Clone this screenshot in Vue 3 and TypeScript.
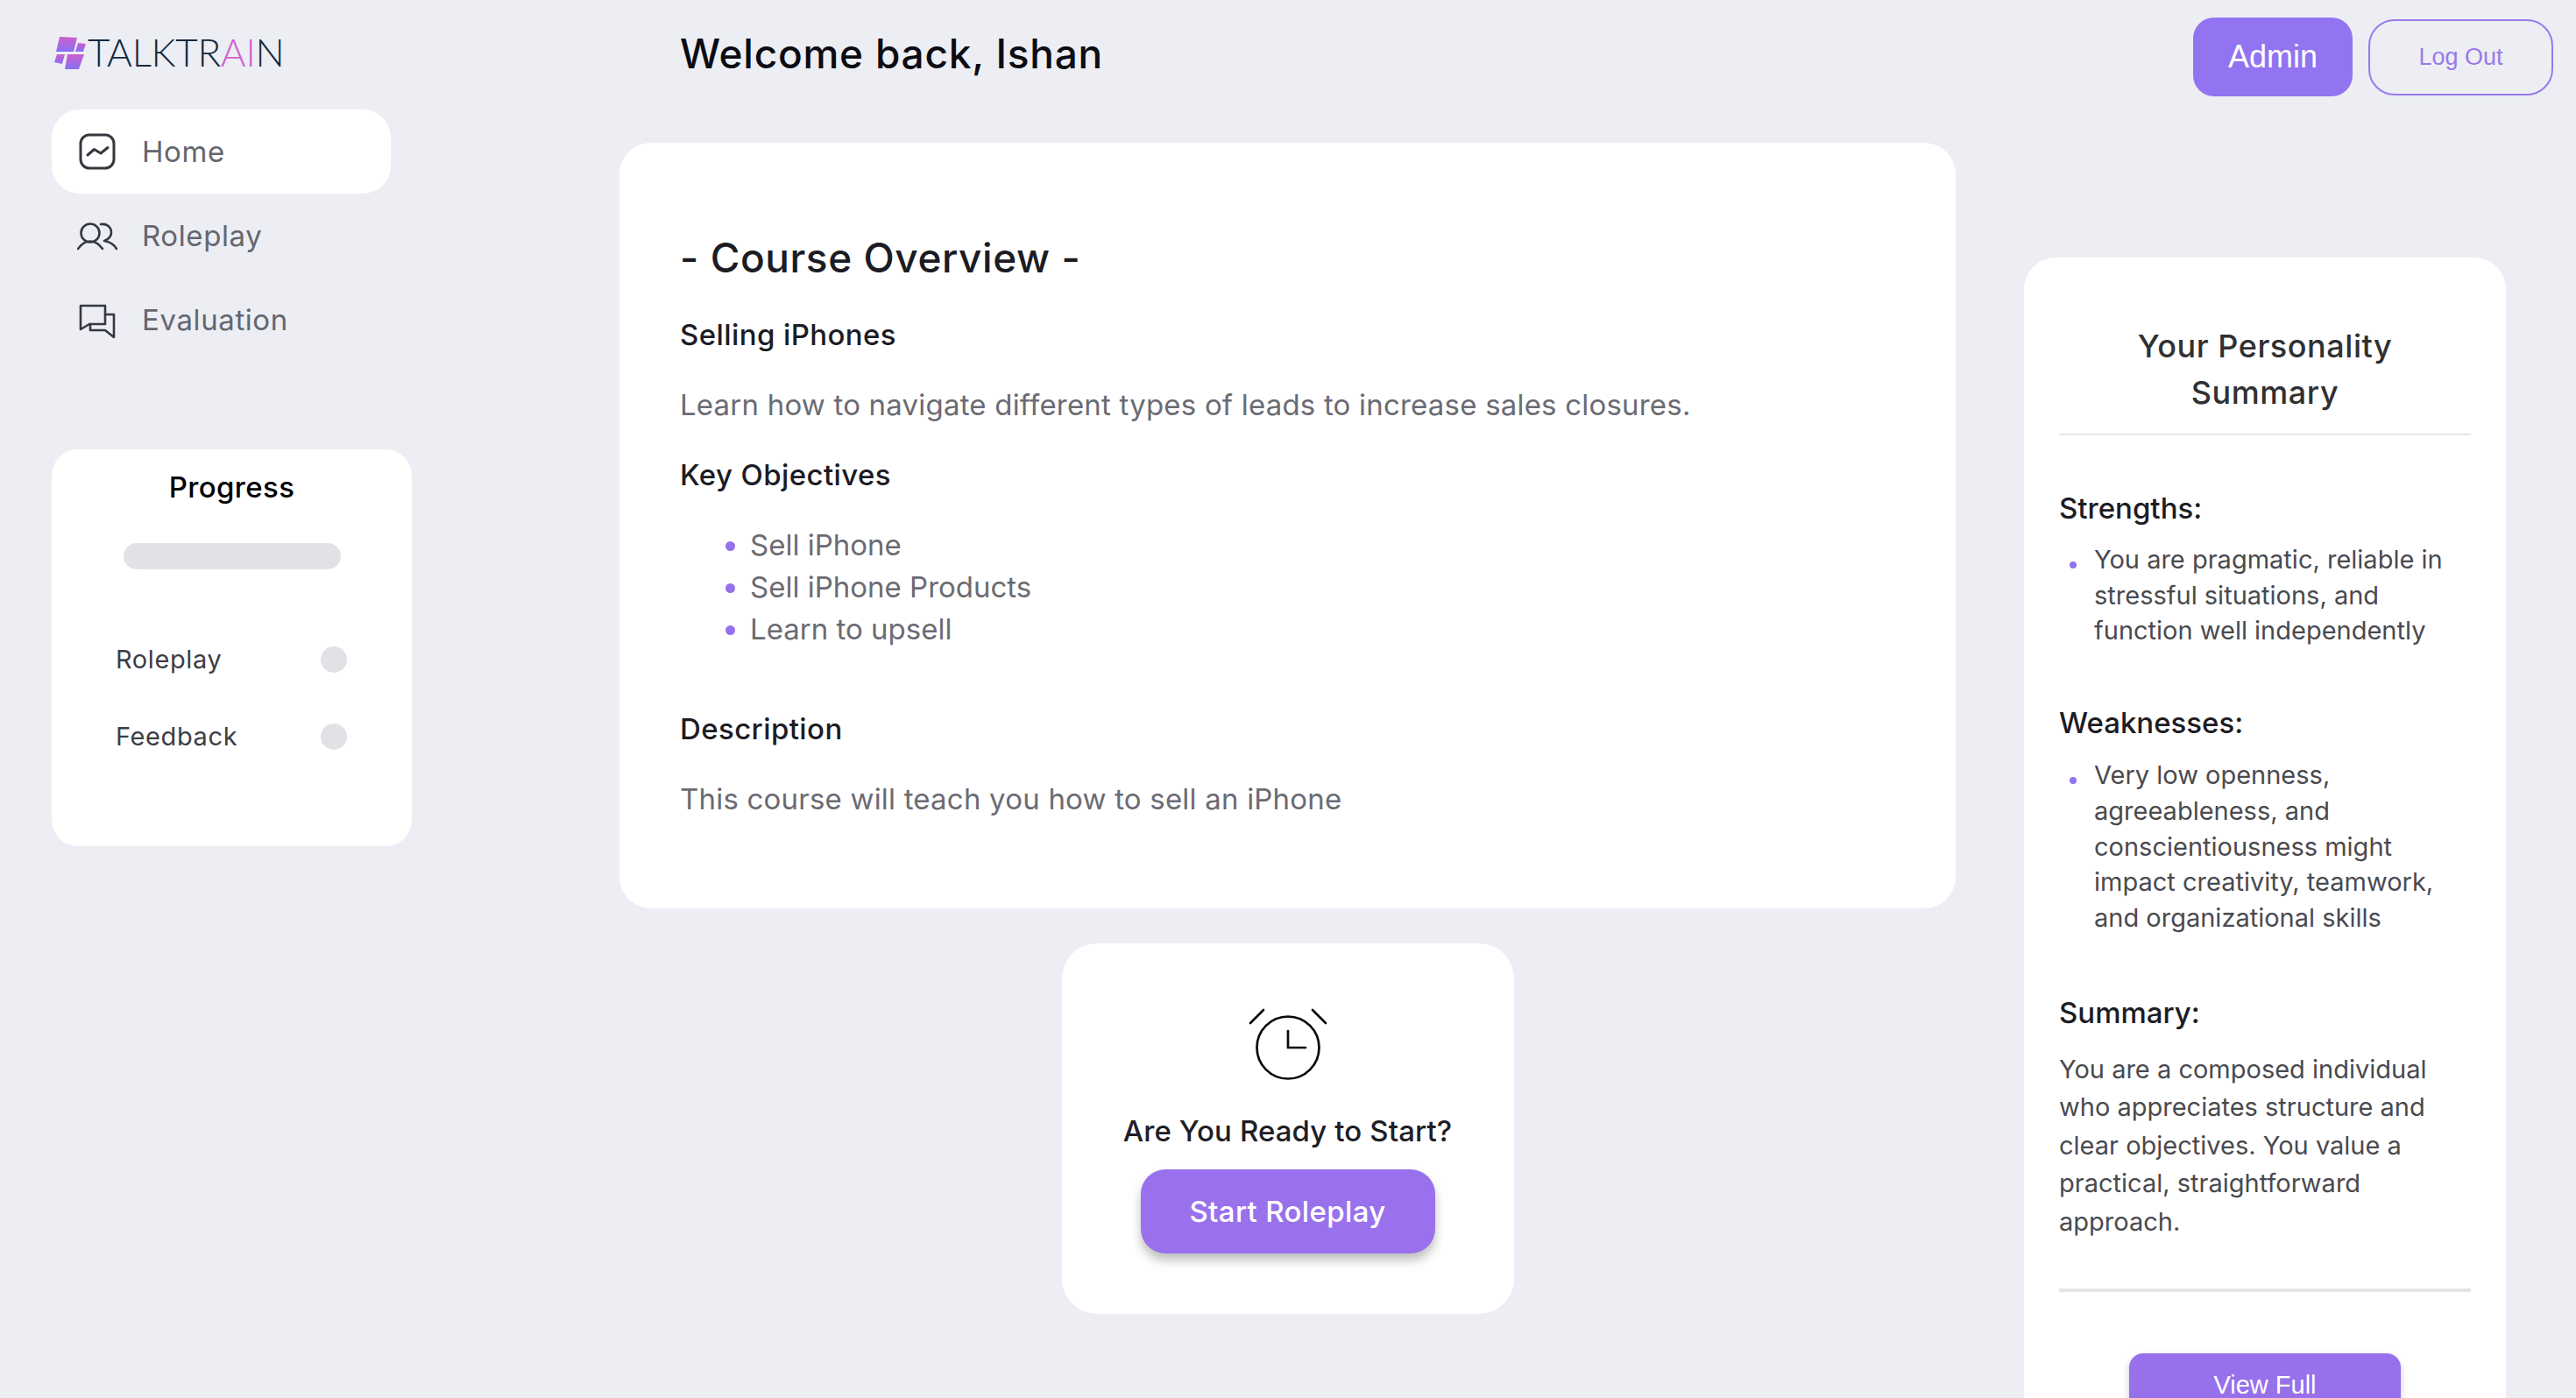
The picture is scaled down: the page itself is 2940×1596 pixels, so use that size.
<script setup lang="ts">
interface NavItem { label: string; active: boolean }
const nav: NavItem[] = [
  { label: 'Home', active: true },
  { label: 'Roleplay', active: false },
  { label: 'Evaluation', active: false },
]
const objectives: string[] = ['Sell iPhone', 'Sell iPhone Products', 'Learn to upsell']
const progress: string[] = ['Roleplay', 'Feedback']
</script>

<template>
  <div class="page">
    <aside class="sidebar">
      <div class="logo">
        <svg class="logo-mark" viewBox="60 38 40 41" width="40" height="41" aria-hidden="true">
          <defs>
            <linearGradient id="lg" x1="0" y1="0" x2="0" y2="1">
              <stop offset="0" stop-color="#cc5fca" />
              <stop offset="1" stop-color="#8a6ff7" />
            </linearGradient>
          </defs>
          <g fill="url(#lg)">
            <path d="M68 40 L88 41 L84 57 L64 57 Z" />
            <path d="M89 47 L98 48 L95 57 L86 57 Z" />
            <path d="M65 60 L74 60 L71 71 L62 69 Z" />
            <path d="M77 60 L96 60 L90 77 L74 77 Z" />
          </g>
        </svg>
        <span class="logo-text">TALKTR<span class="logo-ai">AI</span>N</span>
      </div>

      <nav class="nav">
        <div v-for="item in nav" :key="item.label" class="nav-item" :class="{ active: item.active }">
          <svg v-if="item.label === 'Home'" class="nav-icon" viewBox="88 150 46 46" aria-hidden="true">
            <rect x="92" y="154" width="38" height="38" rx="10" />
            <path d="M100 177 L107.500 170.500 L115 175 L123 168.500" />
          </svg>
          <svg v-else-if="item.label === 'Roleplay'" class="nav-icon thin" viewBox="88 245 46 46" aria-hidden="true">
            <circle cx="103" cy="265" r="10.500" />
            <path d="M89 283 C94 276 98 274.500 103 274.500 C108 274.500 112 276 117 283" />
            <path d="M115 255 C122 254 127 258 127 264.500 C127 269 124 272 119 274 C125 275 130 278 133 283" />
          </svg>
          <svg v-else class="nav-icon thin" viewBox="88 341 46 46" aria-hidden="true">
            <path d="M92 348 H120 V369 H102 L92 375 Z" />
            <path d="M120 358 H130 V384 L120 376 H103 V369" />
          </svg>
          <span>{{ item.label }}</span>
        </div>
      </nav>

      <section class="progress-card">
        <h3 class="progress-title">Progress</h3>
        <div class="progress-bar"></div>
        <div v-for="p in progress" :key="p" class="progress-row">
          <span>{{ p }}</span>
          <i class="dot"></i>
        </div>
      </section>
    </aside>

    <div class="content">
      <header class="header">
        <h1 class="welcome">Welcome back, Ishan</h1>
        <div class="header-actions">
          <button class="btn-admin">Admin</button>
          <button class="btn-logout">Log Out</button>
        </div>
      </header>

      <div class="body">
        <main class="center">
          <section class="overview">
            <h2 class="overview-title">- Course Overview -</h2>
            <h4 class="sub first">Selling iPhones</h4>
            <p class="text">Learn how to navigate different types of leads to increase sales closures.</p>
            <h4 class="sub">Key Objectives</h4>
            <ul class="objectives">
              <li v-for="o in objectives" :key="o">{{ o }}</li>
            </ul>
            <h4 class="sub desc">Description</h4>
            <p class="text">This course will teach you how to sell an iPhone</p>
          </section>

          <section class="start-card">
            <svg class="clock" viewBox="0 0 96 88" width="96" height="88" aria-hidden="true">
              <circle cx="48" cy="47" r="35.500" />
              <path d="M48 28 V47 H68" />
              <path d="M20 4 L5 19" />
              <path d="M76 4 L91 19" />
            </svg>
            <p class="ready">Are You Ready to Start?</p>
            <button class="btn-start">Start Roleplay</button>
          </section>
        </main>

        <aside class="summary">
          <h3 class="summary-title">Your Personality<br />Summary</h3>
          <h4 class="sum-head strengths">Strengths:</h4>
          <ul class="sum-list">
            <li>You are pragmatic, reliable in<br />stressful situations, and<br />function well independently</li>
          </ul>
          <h4 class="sum-head">Weaknesses:</h4>
          <ul class="sum-list weak">
            <li>Very low openness,<br />agreeableness, and<br />conscientiousness might<br />impact creativity, teamwork,<br />and organizational skills</li>
          </ul>
          <h4 class="sum-head last">Summary:</h4>
          <p class="sum-text">You are a composed individual<br />who appreciates structure and<br />clear objectives. You value a<br />practical, straightforward<br />approach.</p>
          <hr class="sum-rule" />
          <button class="btn-view">View Full</button>
        </aside>
      </div>
    </div>
  </div>
</template>

<style>
html, body { margin: 0; background: #eceef4; }
</style>

<style scoped>
.page {
  display: flex;
  width: 2940px;
  height: 1596px;
  overflow: hidden;
  background: #eceef4;
  font-family: Inter, "Noto Sans", sans-serif;
}
h1, h2, h3, h4, p, ul { margin: 0; padding: 0; font-weight: 550; }
button { font: inherit; border: 0; cursor: pointer; }

.sidebar { width: 648px; padding: 40px 0 0 59px; flex: none; box-sizing: content-box; }
.logo { display: flex; align-items: center; height: 41px; margin-left: 1px; }
.logo-mark { display: block; flex: none; }
.logo-text {
  margin-top: -2px;
  font-family: Lato, sans-serif;
  font-weight: 300;
  font-size: 44px;
  line-height: 41px;
  color: #12293f;
  letter-spacing: -0.3px;
}
.logo-ai { color: #cf62cf; }

.nav { margin-top: 44px; width: 387px; }
.nav-item {
  display: flex;
  align-items: center;
  gap: 28px;
  height: 96px;
  padding-left: 29px;
  border-radius: 32px;
  color: #65666e;
  font-size: 33px;
  letter-spacing: 0.6px;
}
.nav-item.active { background: #fff; }
.nav-icon { width: 46px; height: 46px; flex: none; fill: none; stroke: #36373f; stroke-width: 3; stroke-linecap: round; stroke-linejoin: round; }
.nav-icon.thin { stroke-width: 2.600px; }

.progress-card {
  width: 411px;
  height: 453px;
  margin-top: 100px;
  padding-top: 19px;
  box-sizing: border-box;
  background: #fff;
  border-radius: 30px;
}
.progress-title { text-align: center; font-size: 33px; line-height: 48px; color: #000; letter-spacing: 0.35px; }
.progress-bar { width: 248px; height: 30px; margin: 40px auto 88px; background: #e1e2e6; border-radius: 15px; }
.progress-row {
  display: flex;
  justify-content: space-between;
  align-items: center;
  height: 30px;
  margin-bottom: 58px;
  padding: 0 74px 0 73px;
  font-size: 29px;
  color: #3c3d47;
  letter-spacing: 0.6px;
}
.progress-row span { margin-top: -2px; }
.dot { width: 30px; height: 30px; border-radius: 50%; background: #e1e2e6; }

.content { flex: 1; min-width: 0; }
.header { display: flex; justify-content: space-between; height: 163px; padding: 20px 26px 0 69px; box-sizing: border-box; }
.welcome { margin-top: 10px; font-size: 46px; line-height: 62px; color: #0c0c12; letter-spacing: 0.75px; }
.header-actions { display: flex; align-items: center; gap: 18px; height: 90px; }
.btn-admin {
  width: 182px;
  height: 90px;
  background: #9273f0;
  color: #fff;
  border-radius: 24px;
  font-family: "Liberation Sans", sans-serif;
  font-size: 36px;
}
.btn-logout {
  width: 211px;
  height: 87px;
  background: transparent;
  border: 2px solid #9a79ea;
  box-sizing: border-box;
  color: #9a79ea;
  border-radius: 30px;
  font-family: "Liberation Sans", sans-serif;
  font-size: 27px;
}

.body { display: flex; }
.center { width: 1525px; flex: none; }
.overview {
  background: #fff;
  border-radius: 36px;
  padding: 101px 69px 101px;
}
.overview-title { font-size: 46px; line-height: 60px; color: #1c1c24; letter-spacing: 0.55px; }
.sub { font-size: 33px; line-height: 48px; color: #1c1c24; margin-top: 32px; letter-spacing: 0.4px; }
.sub.first { margin-top: 34px; }
.sub.desc { margin-top: 66px; }
.text { font-size: 33px; line-height: 48px; font-weight: 400; color: #6b6b73; margin-top: 32px; letter-spacing: 0.2px; }
.objectives { margin-top: 32px; padding-left: 80px; font-size: 33px; line-height: 48px; font-weight: 400; color: #6b6b73; }
.objectives li::marker { color: #9770eb; }

.start-card {
  width: 516px;
  height: 423px;
  margin: 40px auto 0;
  padding-top: 72px;
  box-sizing: border-box;
  background: #fff;
  border-radius: 40px;
  display: flex;
  flex-direction: column;
  align-items: center;
}
.clock { display: block; fill: none; stroke: #0a0a0a; stroke-width: 2.700px; stroke-linecap: round; }
.ready { margin-top: 30px; font-size: 33px; line-height: 48px; color: #1e1e26; white-space: nowrap; letter-spacing: 0.1px; }
.btn-start {
  margin-top: 20px;
  width: 336px;
  height: 96px;
  background: #9971ec;
  color: #fff;
  border-radius: 28px;
  font-size: 33px;
  font-weight: 550;
  letter-spacing: 0.35px;
  box-shadow: 0 8px 12px rgba(0, 0, 0, 0.25);
}

.summary {
  width: 550px;
  flex: none;
  margin-left: 78px;
  margin-top: 131px;
  padding: 75px 40px 40px;
  box-sizing: border-box;
  background: #fff;
  border-radius: 36px 36px 0 0;
  align-self: flex-start;
}
.summary-title {
  font-size: 36px;
  line-height: 53px;
  text-align: center;
  color: #303034;
  padding-bottom: 20px;
  border-bottom: 2px solid #e5e5e5;
  letter-spacing: 0.55px;
}
.sum-head { font-size: 33px; line-height: 48px; color: #1c1c24; margin-top: 60px; }
.sum-head.strengths { margin-top: 59px; }
.sum-head.last { margin-top: 63px; }
.sum-list { margin-top: 15px; padding-left: 40px; font-size: 29px; line-height: 40.700px; font-weight: 400; color: #4a4a4f; white-space: nowrap; list-style: none; }
.sum-list.weak { margin-top: 16px; }
.sum-list li { position: relative; }
.sum-list li::before {
  content: "";
  position: absolute;
  left: -28px;
  top: 22px;
  width: 8px;
  height: 8px;
  border-radius: 50%;
  background: #9273f0;
}
.sum-text { margin-top: 19px; font-size: 29px; line-height: 43.500px; font-weight: 400; color: #4a4a4f; white-space: nowrap; }
.sum-rule { margin: 55px 0 0; border: 0; height: 4px; background: #e5e5e5; }
.btn-view {
  display: block;
  margin: 70px auto 0;
  width: 310px;
  height: 72px;
  background: #9770eb;
  color: #fff;
  border-radius: 16px;
  font-family: "Liberation Sans", sans-serif;
  font-size: 29px;
  box-shadow: 0 4px 8px rgba(0, 0, 0, 0.2);
}
</style>
